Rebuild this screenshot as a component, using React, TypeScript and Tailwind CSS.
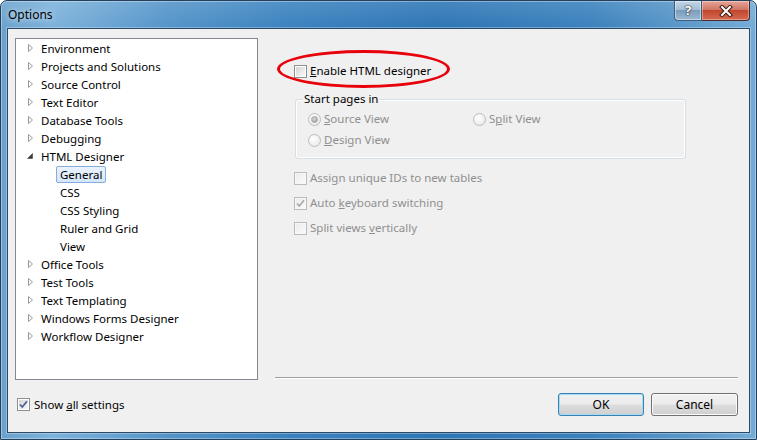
import type { ReactNode } from "react";

type TreeItem = {
  label: string;
  kind: "collapsed" | "expanded" | "child";
  selected?: boolean;
};

const tree: TreeItem[] = [
  { label: "Environment", kind: "collapsed" },
  { label: "Projects and Solutions", kind: "collapsed" },
  { label: "Source Control", kind: "collapsed" },
  { label: "Text Editor", kind: "collapsed" },
  { label: "Database Tools", kind: "collapsed" },
  { label: "Debugging", kind: "collapsed" },
  { label: "HTML Designer", kind: "expanded" },
  { label: "General", kind: "child", selected: true },
  { label: "CSS", kind: "child" },
  { label: "CSS Styling", kind: "child" },
  { label: "Ruler and Grid", kind: "child" },
  { label: "View", kind: "child" },
  { label: "Office Tools", kind: "collapsed" },
  { label: "Test Tools", kind: "collapsed" },
  { label: "Text Templating", kind: "collapsed" },
  { label: "Windows Forms Designer", kind: "collapsed" },
  { label: "Workflow Designer", kind: "collapsed" },
];

function Arrow({ kind }: { kind: TreeItem["kind"] }) {
  if (kind === "expanded") {
    return (
      <svg width="8" height="10" viewBox="0 0 8 10">
        <path d="M6.5 2.5 L6.5 7.5 L1.5 7.5 Z" fill="#3c3c3c" stroke="#5a5a5a" strokeWidth="0.8" />
      </svg>
    );
  }
  return (
    <svg width="8" height="10" viewBox="0 0 8 10">
      <path d="M2.5 1.5 L6.5 5 L2.5 8.5 Z" fill="#ffffff" stroke="#9a9a9a" strokeWidth="1" />
    </svg>
  );
}

function CheckBox({ checked, disabled }: { checked?: boolean; disabled?: boolean }) {
  return (
    <div
      className={`w-[13px] h-[13px] shrink-0 border p-[1px] ${
        disabled ? "border-[#bcbcbc] bg-[#f7f7f7]" : "border-[#8e8f8f] bg-white"
      }`}
    >
      <div
        className={`relative w-full h-full ${
          disabled
            ? "bg-[linear-gradient(135deg,#ececec,#fafafa)]"
            : "bg-[linear-gradient(135deg,#d5d5d5,#f8f8f8)]"
        }`}
      >
        {checked && (
          <svg className="absolute -left-[1px] -top-[1px]" width="11" height="11" viewBox="0 0 11 11">
            <path
              d="M2 5.5 L4.3 8 L9 2.2"
              fill="none"
              stroke={disabled ? "#a9a9a9" : "#4a5d96"}
              strokeWidth="1.7"
            />
          </svg>
        )}
      </div>
    </div>
  );
}

function Radio({ checked }: { checked?: boolean }) {
  return (
    <div className="w-[13px] h-[13px] shrink-0 rounded-full border border-[#bcbcbc] bg-[radial-gradient(circle_at_40%_35%,#ffffff,#e4e4e4)] flex items-center justify-center">
      {checked && (
        <div className="w-[7px] h-[7px] rounded-full bg-[radial-gradient(circle_at_40%_35%,#d8d8d8,#9a9a9a)] border border-[#a6a6a6]" />
      )}
    </div>
  );
}

function Field({
  control,
  children,
  disabled,
}: {
  control: ReactNode;
  children: ReactNode;
  disabled?: boolean;
}) {
  return (
    <div className="flex items-center h-[18px] gap-[3px]">
      {control}
      <span className={disabled ? "text-[#8f8f8f]" : "text-black"}>{children}</span>
    </div>
  );
}

function Button({ label, isDefault }: { label: string; isDefault?: boolean }) {
  return (
    <button
      className={`h-[23px] rounded-[3px] border text-[12px] text-black bg-[linear-gradient(to_bottom,#f2f2f2,#ebebeb_48%,#dddddd_52%,#cfcfcf)] ${
        isDefault
          ? "w-[86px] border-[#3c7fb1] shadow-[inset_0_0_0_1px_#9fdcf6]"
          : "w-[87px] border-[#707070] shadow-[inset_0_0_0_1px_#fbfbfb]"
      }`}
    >
      {label}
    </button>
  );
}

export default function App() {
  return (
    <div className="w-[757px] h-[440px] font-['Noto_Sans','Open_Sans',sans-serif] text-[11.5px] leading-none">
      <div className="w-full h-full flex flex-col border border-[#23405c] rounded-t-[7px] px-[6px] pb-[6px] bg-[linear-gradient(to_bottom,rgba(255,255,255,0.12),rgba(255,255,255,0)_28px),linear-gradient(to_right,#6aa2cd,#7cb2db_7%,#5494c9_22%,#3a82bf_38%,#2d76b5_58%,#3a81bd_78%,#5e9acb_92%,#74acd7)] shadow-[inset_0_0_0_1px_rgba(255,255,255,0.35)]">
        {/* title bar */}
        <div className="h-[27px] flex items-start">
          <div className="h-full flex items-center pl-[1px] text-[12px] text-black [text-shadow:0_0_6px_rgba(255,255,255,0.9)]">
            Options
          </div>
          <div className="ml-auto flex">
            <div className="w-[28px] h-[20px] rounded-bl-[4px] border border-t-0 border-[#3f5d7a] bg-[linear-gradient(to_bottom,#c4d6e6,#a3bdd4_45%,#7b9cbb_50%,#9cb9d3)] flex items-center justify-center shadow-[inset_0_0_0_1px_rgba(255,255,255,0.45)]">
              <span className="text-white text-[13px] font-bold [text-shadow:0_0_1px_#222,0_0_2px_#222]">?</span>
            </div>
            <div className="w-[48px] h-[20px] rounded-br-[4px] border border-l-0 border-t-0 border-[#4a2a2a] bg-[linear-gradient(to_bottom,#e6a598,#d17766_45%,#c2472f_50%,#d46a50)] flex items-center justify-center shadow-[inset_0_0_0_1px_rgba(255,255,255,0.35)]">
              <svg width="14" height="12" viewBox="0 0 14 12">
                <path d="M3 2 L11 10 M11 2 L3 10" stroke="#3a1a14" strokeWidth="4" strokeLinecap="square" />
                <path d="M3 2 L11 10 M11 2 L3 10" stroke="#ffffff" strokeWidth="2" strokeLinecap="square" />
              </svg>
            </div>
          </div>
        </div>

        {/* client area */}
        <div className="flex-1 flex flex-col bg-[#f0f0f0] border border-[#2b4a68] shadow-[0_0_0_1px_rgba(255,255,255,0.3)] pt-[9px] pl-[7px] pr-[11px]">
          <div className="flex items-start">
            <div className="w-[243px] h-[342px] shrink-0 bg-white border border-[#828790] text-black">
              {tree.map((item) =>
                item.kind === "child" ? (
                  <div key={item.label} className="h-[18px] flex items-center pl-[40px]">
                    <span
                      className={`h-[17px] flex items-center pt-[1px] px-[3px] rounded-[2px] border ${
                        item.selected
                          ? "border-[#84acdd] bg-[linear-gradient(to_bottom,#eaf3fd,#d5e6fa)]"
                          : "border-transparent"
                      }`}
                    >
                      {item.label}
                    </span>
                  </div>
                ) : (
                  <div key={item.label} className="h-[18px] flex items-center pl-[10px] gap-[7px]">
                    <Arrow kind={item.kind} />
                    <span className="pt-[1px]">{item.label}</span>
                  </div>
                )
              )}
            </div>

            <div className="flex-1 ml-[17px] flex flex-col">
              <div className="h-[339px] flex flex-col pt-[24px]">
                <div className="relative pl-[19px]">
                  <div className="absolute left-[2px] -top-[12px] w-[173px] h-[38px] rounded-[50%] border-[3px] border-[#e8000b]" />
                  <Field control={<CheckBox />}>
                    <span className="underline">E</span>nable HTML designer
                  </Field>
                </div>

                <div className="relative ml-[20px] mt-[19px] w-[391px] h-[60px] rounded-[3px] border border-[#d5dfe5] shadow-[inset_0_0_0_1px_#ffffff]">
                  <span className="absolute left-[7px] -top-[7px] px-[1px] bg-[#f0f0f0] text-black">
                    Start pages in
                  </span>
                  <div className="grid grid-cols-[165px_1fr] gap-y-[3px] pt-[10px] pl-[12px]">
                    <Field control={<Radio checked />} disabled>
                      <span className="underline">S</span>ource View
                    </Field>
                    <Field control={<Radio />} disabled>
                      S<span className="underline">p</span>lit View
                    </Field>
                    <Field control={<Radio />} disabled>
                      <span className="underline">D</span>esign View
                    </Field>
                  </div>
                </div>

                <div className="flex flex-col gap-[7px] mt-[10px] pl-[19px]">
                  <Field control={<CheckBox disabled />} disabled>
                    Assi<span className="underline">g</span>n unique IDs to new tables
                  </Field>
                  <Field control={<CheckBox checked disabled />} disabled>
                    Auto <span className="underline">k</span>eyboard switching
                  </Field>
                  <Field control={<CheckBox disabled />} disabled>
                    Split views <span className="underline">v</span>ertically
                  </Field>
                </div>
              </div>
              <div className="h-[2px] border-t border-[#a0a0a0] border-b border-b-white" />
            </div>
          </div>

          <div className="flex items-center mt-[13px]">
            <div className="pl-[2px] flex items-center gap-[4px] text-black">
              <CheckBox checked />
              <span>
                Show <span className="underline">a</span>ll settings
              </span>
            </div>
            <div className="ml-auto flex gap-[7px]">
              <Button label="OK" isDefault />
              <Button label="Cancel" />
            </div>
          </div>
        </div>
      </div>
    </div>
  );
}
